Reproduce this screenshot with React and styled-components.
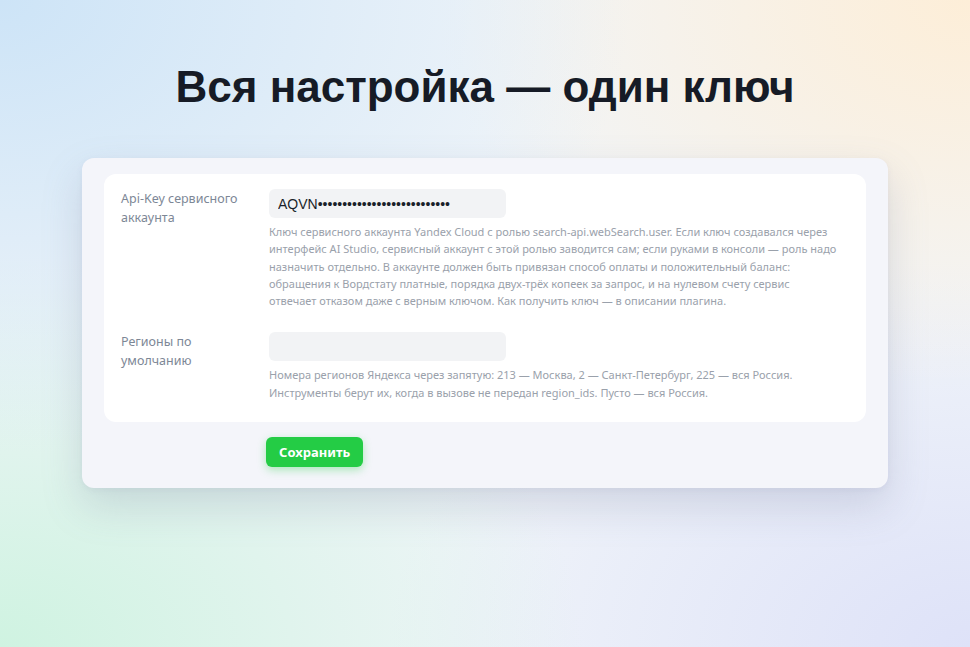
import React from 'react'
import styled, { createGlobalStyle } from 'styled-components';

const GlobalStyle = createGlobalStyle`
    html, body {
        margin: 0;
        padding: 0;
    }
    body {
        font-family: 'Noto Sans', 'Open Sans', sans-serif;
    }
`;

const fields = [
    {
        label: <>Api-Key сервисного<br/>аккаунта</>,
        value: 'AQVN•••••••••••••••••••••••••••',
        help: [
            'Ключ сервисного аккаунта Yandex Cloud с ролью search-api.webSearch.user. Если ключ создавался через',
            'интерфейс AI Studio, сервисный аккаунт с этой ролью заводится сам; если руками в консоли — роль надо',
            'назначить отдельно. В аккаунте должен быть привязан способ оплаты и положительный баланс:',
            'обращения к Вордстату платные, порядка двух-трёх копеек за запрос, и на нулевом счету сервис',
            'отвечает отказом даже с верным ключом. Как получить ключ — в описании плагина.',
        ],
    },
    {
        label: <>Регионы по<br/>умолчанию</>,
        value: '',
        help: [
            'Номера регионов Яндекса через запятую: 213 — Москва, 2 — Санкт-Петербург, 225 — вся Россия.',
            'Инструменты берут их, когда в вызове не передан region_ids. Пусто — вся Россия.',
        ],
    },
];

const App = () => {
return (
    <Page>
        <GlobalStyle/>
        <Title>Вся настройка — один ключ</Title>
        <Card>
            <Panel>
                {fields.map((f, i) => (
                    <FieldRow key={i}>
                        <Label>{f.label}</Label>
                        <FieldBody>
                            <Input readOnly value={f.value}/>
                            <Help>
                                {f.help.map((line, j) => (
                                    <React.Fragment key={j}>{line}<br/></React.Fragment>
                                ))}
                            </Help>
                        </FieldBody>
                    </FieldRow>
                ))}
            </Panel>
            <Actions>
                <SaveButton>Сохранить</SaveButton>
            </Actions>
        </Card>
    </Page>
)
}
export default App

const Page = styled.div`
    width: 970px;
    height: 647px;
    box-sizing: border-box;
    overflow: hidden;
    display: flex;
    flex-direction: column;
    align-items: center;
    padding-top: 60px;
    background:
        radial-gradient(ellipse 65% 70% at 0% 0%, #cde4f7 0%, rgba(205,228,247,0) 100%),
        radial-gradient(ellipse 55% 60% at 100% 0%, #fdeed8 0%, rgba(253,238,216,0) 100%),
        radial-gradient(ellipse 60% 60% at 0% 100%, #cff3e1 0%, rgba(207,243,225,0) 100%),
        radial-gradient(ellipse 60% 60% at 100% 100%, #dee2f8 0%, rgba(222,226,248,0) 100%),
        #f1f5f9;
`;

const Title = styled.h1`
    margin: 0;
    font-family: 'Liberation Sans', Arial, sans-serif;
    font-weight: 700;
    font-size: 44px;
    line-height: 54px;
    color: #161b26;
`;

const Card = styled.div`
    width: 806px;
    box-sizing: border-box;
    margin-top: 44px;
    padding: 16px 22px 21px;
    background: #f4f5fa;
    border-radius: 12px;
    box-shadow: 0 18px 40px rgba(110, 120, 150, 0.22), 0 2px 6px rgba(110, 120, 150, 0.08);
`;

const Panel = styled.div`
    display: flex;
    flex-direction: column;
    gap: 23px;
    background: #ffffff;
    border-radius: 12px;
    padding: 15px 17px 21px;
`;

const FieldRow = styled.div`
    display: flex;
`;

const Label = styled.div`
    width: 148px;
    flex-shrink: 0;
    padding-top: 1px;
    font-size: 12.5px;
    line-height: 18.5px;
    color: #7d8796;
`;

const FieldBody = styled.div`
    display: flex;
    flex-direction: column;
`;

const Input = styled.input`
    width: 237px;
    height: 29px;
    box-sizing: border-box;
    border: none;
    outline: none;
    border-radius: 6px;
    background: #f2f3f5;
    padding: 0 9px;
    font-family: 'Liberation Sans', Arial, sans-serif;
    font-size: 14px;
    color: #1a1f29;
`;

const Help = styled.div`
    margin-top: 5px;
    font-size: 11px;
    line-height: 17.3px;
    color: #9aa1ab;
    white-space: nowrap;
`;

const Actions = styled.div`
    padding: 15px 0 0 162px;
`;

const SaveButton = styled.button`
    height: 30px;
    padding: 0 13px;
    border: none;
    border-radius: 6px;
    background: #24cc45;
    color: #ffffff;
    font-family: 'Noto Sans', sans-serif;
    font-weight: 700;
    font-size: 13px;
    box-shadow: 0 3px 8px rgba(36, 204, 69, 0.35);
    cursor: pointer;
`;
